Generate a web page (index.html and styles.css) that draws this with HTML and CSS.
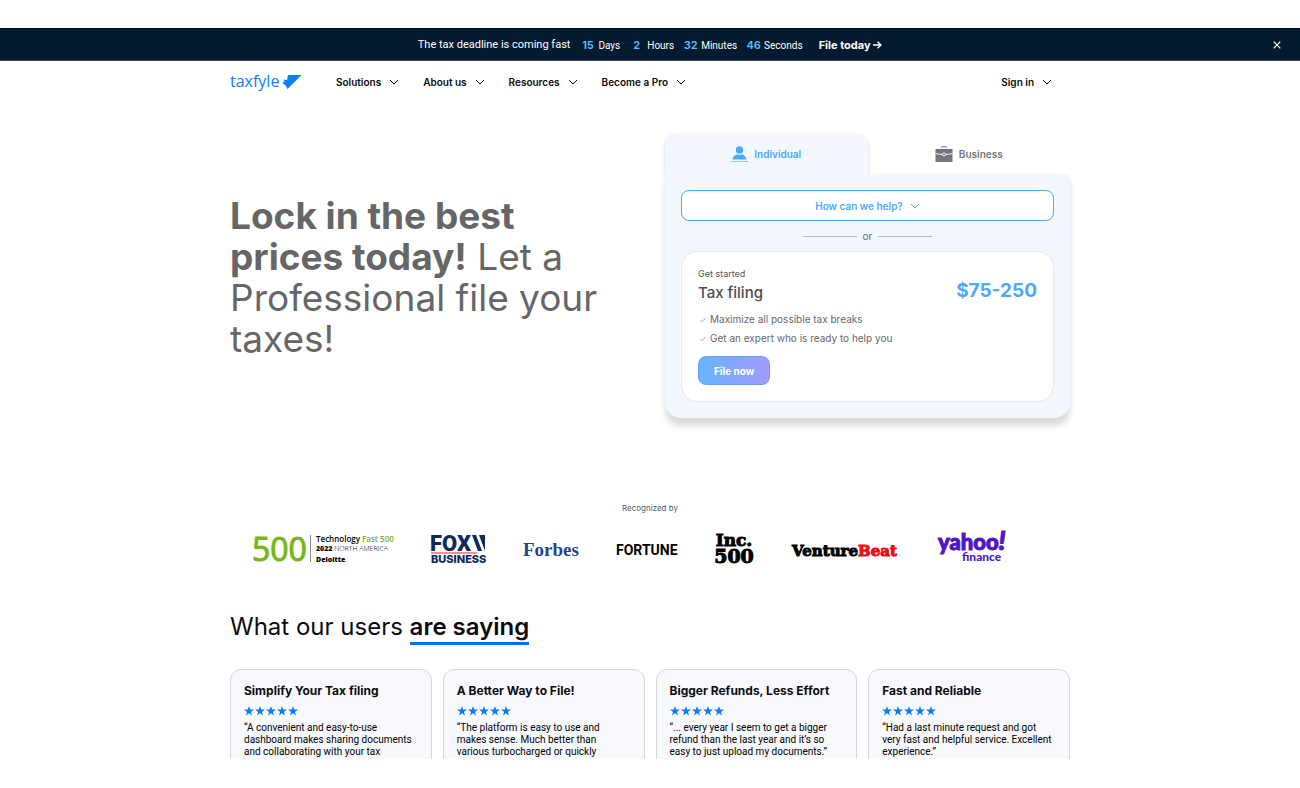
FILE: index.html
```html
<!DOCTYPE html>
<html lang="en">
<head>
    <meta charset="utf-8">
    <title>Taxfyle</title>
    <meta name="viewport" content="width=device-width, initial-scale=1.0">
    <link rel="stylesheet" href="styles.css">
</head>
<body>
    <!-- Chevron and star shared by the whole page -->
    <svg class="sprite" aria-hidden="true">
        <symbol id="chevron" viewBox="0 0 10 10"><path d="M1 3l4 4 4-4" fill="none" stroke="currentColor"/></symbol>
        <symbol id="star" viewBox="0 0 10 10"><path d="M5 0l1.2 3.6H10L6.9 5.9l1.2 3.7L5 7.300 1.900 9.600l1.200-3.700L0 3.600h3.800z" fill="currentColor"/></symbol>
        <symbol id="stars" viewBox="0 0 54 10">
            <use href="#star" x="0" width="10" height="10"/>
            <use href="#star" x="11" width="10" height="10"/>
            <use href="#star" x="22" width="10" height="10"/>
            <use href="#star" x="33" width="10" height="10"/>
            <use href="#star" x="44" width="10" height="10"/>
        </symbol>
        <symbol id="check" viewBox="0 0 6 6"><path d="M.5 3.300L2 4.800 5.500 1" fill="none" stroke="currentColor" stroke-width=".6"/></symbol>
    </svg>

    <div class="banner">
        <div class="banner-content">
            <span class="banner-text">The tax deadline is coming fast</span>
            <div class="countdown">
                <span><b>15</b>Days</span>
                <span><b>2</b>Hours</span>
                <span><b>32</b>Minutes</span>
                <span><b>46</b>Seconds</span>
            </div>
            <a class="banner-link" href="#">File today
                <svg width="9" height="8" viewBox="0 0 9 8"><path d="M0 4h8M4.500.700L8 4 4.500 7.300" fill="none" stroke="currentColor" stroke-width="1.300"/></svg>
            </a>
        </div>
        <button class="banner-close" aria-label="Close">
            <svg width="8" height="8" viewBox="0 0 8 8"><path d="M.7.700l6.600 6.600M7.300.700L.7 7.300" stroke="currentColor" stroke-width="1.200"/></svg>
        </button>
    </div>

    <header class="container nav">
        <a class="logo" href="#" aria-label="Taxfyle">
            <svg width="72" height="22" viewBox="0 0 72 22">
                <text class="logo-text" x="0" y="16">taxfyle</text>
                <path d="M58 4h13.500L57.500 18l-1.500-3-4-3.500 2.500-.5-1-2.500 3.500.5z" fill="#0a80ff"/>
            </svg>
        </a>
        <nav class="nav-menu">
            <button class="nav-item">Solutions <svg class="chevron"><use href="#chevron"/></svg></button>
            <button class="nav-item">About us <svg class="chevron"><use href="#chevron"/></svg></button>
            <button class="nav-item">Resources <svg class="chevron"><use href="#chevron"/></svg></button>
            <button class="nav-item">Become a Pro <svg class="chevron"><use href="#chevron"/></svg></button>
        </nav>
        <button class="nav-item sign-in">Sign in <svg class="chevron"><use href="#chevron"/></svg></button>
    </header>

    <main>
        <section class="container hero">
            <h1><strong>Lock in the best prices today!</strong> Let a Professional file your taxes!</h1>

            <div class="quote">
                <div class="tabs">
                    <button class="tab active">
                        <svg width="17" height="17" viewBox="0 0 17 17" fill="currentColor"><circle cx="8.500" cy="4" r="3.700"/><path d="M1.500 13.500c.6-3.300 3-5 4.500-5.300 1.500 1 3.500 1 5 0 1.500.3 3.900 2 4.500 5.300z"/><path d="M0 15h17v1H0z" opacity=".6"/></svg>
                        Individual
                    </button>
                    <button class="tab">
                        <svg width="18" height="17" viewBox="0 0 18 17"><path d="M6 1.500C7 .3 11 .3 12 1.500" fill="none" stroke="currentColor"/><path d="M.5 3h17v13H.5z" fill="currentColor"/><path d="M.5 7.500c3 .9 5 .9 7 .9m3 0c2 0 4 0 7-.9" fill="none" stroke="#fff" stroke-width=".9"/><circle cx="9" cy="8.500" r="1.500" fill="none" stroke="#fff" stroke-width=".9"/></svg>
                        Business
                    </button>
                </div>
                <div class="panel">
                    <button class="help">How can we help? <svg class="chevron"><use href="#chevron"/></svg></button>
                    <div class="or"><span>or</span></div>
                    <div class="offer">
                        <div class="offer-head">
                            <div>
                                <p class="offer-label">Get started</p>
                                <h2>Tax filing</h2>
                            </div>
                            <p class="price">$75-250</p>
                        </div>
                        <ul>
                            <li><svg class="check"><use href="#check"/></svg>Maximize all possible tax breaks</li>
                            <li><svg class="check"><use href="#check"/></svg>Get an expert who is ready to help you</li>
                        </ul>
                        <button class="file-now">File now</button>
                    </div>
                </div>
            </div>
        </section>

        <section class="container recognized">
            <p>Recognized by</p>
            <div class="brands">
                <svg width="141" height="34" viewBox="0 0 141 34">
                    <text class="deloitte-500" x="0" y="29">500</text>
                    <path d="M58.500 3v27" stroke="#888" stroke-width="1"/>
                    <text class="deloitte-line" x="64" y="10">Technology <tspan class="green">Fast 500</tspan></text>
                    <text class="deloitte-small" x="64" y="19"><tspan class="heavy">2022</tspan> NORTH AMERICA</text>
                    <text class="deloitte-name" x="64" y="30">Deloitte<tspan class="green">.</tspan></text>
                </svg>
                <svg width="55" height="34" viewBox="0 0 55 34">
                    <text class="fox" x="-1" y="19">FOX</text>
                    <path d="M41 3h4l6 16h-4zM48 3h6v16z" fill="#0c2a5c"/>
                    <path d="M0 21h46" stroke="#e0252b" stroke-width="1"/>
                    <text class="fox-business" x="0" y="31">BUSINESS</text>
                </svg>
                <svg width="56" height="34" viewBox="0 0 56 34">
                    <text class="forbes" x="0" y="24">Forbes</text>
                </svg>
                <svg width="61" height="34" viewBox="0 0 61 34">
                    <text class="fortune" x="-1" y="23">FORTUNE</text>
                </svg>
                <svg width="40" height="34" viewBox="0 0 40 34">
                    <text class="inc" x="18" y="14">Inc.</text>
                    <text class="inc inc-500" x="18" y="31">500</text>
                </svg>
                <svg width="107" height="34" viewBox="0 0 107 34">
                    <text class="venture" x="-1" y="24">Venture<tspan class="red">Beat</tspan></text>
                </svg>
                <svg width="70" height="34" viewBox="0 0 70 34">
                    <text class="yahoo" x="0" y="18">yahoo<tspan class="yahoo-mark">!</tspan></text>
                    <text class="yahoo-finance" x="24" y="29">finance</text>
                </svg>
            </div>
        </section>

        <section class="container reviews">
            <h2>What our users <strong>are saying</strong></h2>
            <div class="review-list">
                <article class="review">
                    <h3>Simplify Your Tax filing</h3>
                    <svg class="stars"><use href="#stars"/></svg>
                    <p>“A convenient and easy-to-use dashboard makes sharing documents and collaborating with your tax</p>
                </article>
                <article class="review">
                    <h3>A Better Way to File!</h3>
                    <svg class="stars"><use href="#stars"/></svg>
                    <p>“The platform is easy to use and makes sense. Much better than various turbocharged or quickly</p>
                </article>
                <article class="review">
                    <h3>Bigger Refunds, Less Effort</h3>
                    <svg class="stars"><use href="#stars"/></svg>
                    <p>“... every year I seem to get a bigger refund than the last year and it’s so easy to just upload my documents.”</p>
                </article>
                <article class="review">
                    <h3>Fast and Reliable</h3>
                    <svg class="stars"><use href="#stars"/></svg>
                    <p>“Had a last minute request and got very fast and helpful service. Excellent experience.”</p>
                </article>
            </div>
        </section>
    </main>
</body>
</html>
```
FILE: styles.css
```css
* {
    box-sizing: border-box;
}

html {
    height: 100%;
    padding: 28px 0 29px;
    background-color: #fff;
    overflow: hidden;
}

body {
    height: 100%;
    margin: 0;
    overflow: hidden;
    background-color: #fff;
    color: #0b0b0f;
    font-family: Inter, Roboto, Arial, sans-serif;
    font-size: 10px;
}

h1, h2, h3, p, ul {
    margin: 0;
    padding: 0;
}

button {
    margin: 0;
    padding: 0;
    border: none;
    background: none;
    color: inherit;
    font: inherit;
    cursor: pointer;
}

a {
    color: inherit;
    text-decoration: none;
}

svg {
    flex-shrink: 0;
}

.sprite {
    display: none;
}

.container {
    max-width: 840px;
    margin: 0 auto;
}

.chevron {
    width: 10px;
    height: 10px;
}

/* Banner */
.banner {
    display: flex;
    align-items: center;
    height: 33px;
    padding: 0 19px 0 27px;
    border-top: 1px solid #000c1c;
    border-bottom: 1px solid #3c4855;
    background-color: #041a2f;
    color: #fff;
}

.banner-content {
    flex: 1;
    display: flex;
    justify-content: center;
    align-items: center;
    gap: 10px;
}

.banner-text {
    font-family: Roboto, sans-serif;
    font-size: 11px;
}

.countdown {
    display: flex;
    gap: 9px;
    font-family: Roboto, sans-serif;
}

.countdown b {
    display: inline-block;
    width: 15px;
    margin-right: 3px;
    color: #5cc0ff;
    font-family: Inter, sans-serif;
    font-size: 11px;
    font-weight: 600;
    text-align: center;
}

.banner-link {
    margin-left: 6px;
    font-size: 11px;
    font-weight: 700;
}

.banner-close {
    display: flex;
}

/* Navigation */
.nav {
    display: flex;
    align-items: center;
    height: 41px;
    padding-right: 18px;
}

.logo {
    display: flex;
    margin-right: 34px;
}

.logo svg {
    overflow: visible;
}

.logo-text {
    font-family: "Open Sans", sans-serif;
    font-size: 16px;
    font-weight: 400;
    fill: #0a80ff;
}

.nav-menu {
    display: flex;
    gap: 24px;
}

.nav-item {
    display: flex;
    align-items: center;
    gap: 8px;
    font-size: 10px;
    font-weight: 600;
}

.sign-in {
    margin-left: auto;
}

/* Hero */
.hero {
    display: flex;
    align-items: center;
    justify-content: space-between;
    padding: 32px 0 85px;
}

.hero h1 {
    width: 400px;
    padding-top: 2px;
    color: #666;
    font-size: 37px;
    font-weight: 400;
    line-height: 41px;
}

.hero h1 strong {
    font-weight: 700;
}

.quote {
    width: 405px;
}

.tabs {
    display: flex;
}

.tab {
    flex: 1;
    display: flex;
    align-items: center;
    justify-content: center;
    gap: 6px;
    height: 40px;
    border-radius: 12px 12px 0 0;
    color: #74757c;
    font-size: 10px;
    font-weight: 600;
}

.tab.active {
    background-color: #f3f8ff;
    box-shadow: 0 2px 5px rgba(0, 0, 0, 0.16);
    color: #4da8ff;
}

.panel {
    position: relative;
    padding: 16px;
    border-radius: 0 0 16px 16px;
    background-color: #f3f8ff;
    box-shadow: 0 8px 6px rgba(0, 0, 0, 0.14);
}

.help {
    display: flex;
    align-items: center;
    justify-content: center;
    gap: 7px;
    width: 100%;
    height: 31px;
    border: 1px solid #4da8ff;
    border-radius: 8px;
    background-color: #fff;
    color: #4da8ff;
    font-weight: 600;
}

.or {
    display: flex;
    align-items: center;
    justify-content: center;
    gap: 6px;
    height: 30px;
    color: #66686e;
}

.or::before,
.or::after {
    content: "";
    width: 54px;
    height: 1px;
    background-color: #b5bac0;
}

.offer {
    padding: 16px;
    border: 1px solid #e6e8ee;
    border-radius: 16px;
    background-color: #fff;
}

.offer-head {
    display: flex;
    align-items: flex-end;
    justify-content: space-between;
}

.offer-label {
    color: #55565a;
    font-size: 9px;
    line-height: 12px;
}

.offer h2 {
    color: #4d4d50;
    font-size: 15px;
    font-weight: 500;
    line-height: 25px;
}

.price {
    color: #4da8ff;
    font-size: 19px;
    font-weight: 700;
    line-height: 29px;
}

.offer ul {
    padding: 5px 0 8px;
    list-style: none;
}

.offer li {
    display: flex;
    align-items: center;
    gap: 4px;
    padding-left: 2px;
    color: #66686e;
    font-size: 10px;
    line-height: 19px;
}

.check {
    width: 6px;
    height: 6px;
}

.file-now {
    height: 29px;
    padding: 0 15px;
    border: 1px solid #6ba0ff;
    border-radius: 8px;
    background-image: linear-gradient(90deg, #66b4ff, #a59bff);
    color: #fff;
    font-weight: 700;
}

/* Recognized by */
.recognized p {
    color: #5a5d66;
    font-size: 8px;
    line-height: 10px;
    text-align: center;
}

.brands {
    display: flex;
    justify-content: space-between;
    padding: 19px 62px 0 22px;
}

.brands svg {
    overflow: visible;
}

.deloitte-500 {
    font: 400 32px "Open Sans", sans-serif;
    fill: #7ab51d;
    stroke: #7ab51d;
    stroke-width: 1px;
}

.deloitte-line {
    font: 600 8px "Open Sans", sans-serif;
}

.deloitte-small {
    font: 300 7px "Open Sans", sans-serif;
}

.deloitte-name {
    font: 800 7px "Open Sans", sans-serif;
}

.green {
    fill: #7ab51d;
    font-weight: 600;
}

.heavy {
    font-weight: 800;
}

.fox {
    font: 900 22px Roboto, sans-serif;
    fill: #0c2a5c;
}

.fox-business {
    font: 800 11px Inter, sans-serif;
    fill: #0c2a5c;
}

.forbes {
    font: 700 19px "Liberation Serif", serif;
    fill: #1f458c;
}

.fortune {
    font: 700 14px Roboto, sans-serif;
}

.inc {
    font: 700 17px "DejaVu Serif", serif;
    stroke: #000;
    stroke-width: 1px;
    text-anchor: middle;
}

.inc-500 {
    font-size: 19px;
}

.venture {
    font: 700 15px "DejaVu Serif", serif;
    stroke: #000;
    stroke-width: 1px;
}

.red {
    fill: #f00a14;
    stroke: #f00a14;
}

.yahoo {
    font: 900 22px Lato, sans-serif;
    fill: #5015c8;
    stroke: #5015c8;
    stroke-width: 1px;
}

.yahoo-mark {
    font-size: 26px;
    font-style: italic;
}

.yahoo-finance {
    font: 900 12px Lato, sans-serif;
    fill: #5015c8;
}

/* Reviews */
.reviews {
    padding-top: 46px;
}

.reviews h2 {
    margin-bottom: 24px;
    font-size: 24px;
    font-weight: 400;
    line-height: 30px;
}

.reviews h2 strong {
    display: inline-block;
    border-bottom: 3px solid #0a6cff;
    font-weight: 600;
}

.review-list {
    display: grid;
    grid-template-columns: repeat(4, 1fr);
    gap: 11px;
}

.review {
    height: 160px;
    padding: 13px;
    border: 1px solid #d3d7dc;
    border-radius: 11px;
    background-color: #f7f9fd;
}

.review h3 {
    font-size: 12px;
    font-weight: 700;
    line-height: 16px;
}

.stars {
    display: block;
    width: 54px;
    height: 10px;
    margin: 7px 0 6px;
    color: #0a7bff;
}

.review p {
    color: #000;
    font-family: Roboto, sans-serif;
    font-size: 10px;
    line-height: 12px;
}
```
